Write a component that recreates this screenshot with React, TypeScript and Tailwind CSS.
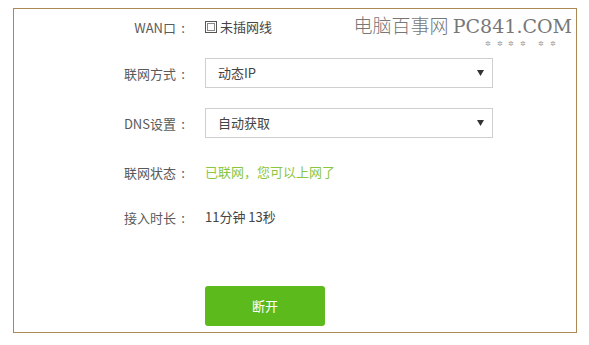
import React from "react";

const font = { fontFamily: '"Noto Sans CJK SC", "Noto Sans", sans-serif' };

function Label({ children }: { children: React.ReactNode }) {
  return (
    <div className="flex w-[176px] shrink-0 items-center justify-end text-[13px] leading-none text-[#5a5a5a]">
      <span>{children}</span>
      <span className="inline-block w-[14px] text-center">:</span>
    </div>
  );
}

function Select({ value }: { value: string }) {
  return (
    <div className="ml-[15px] flex h-[30px] w-[288px] items-center justify-between border border-[#cfcfcf] bg-white pl-[12px] pr-[8px] text-[13px] text-[#444]">
      <span>{value}</span>
      <svg width="7" height="6" viewBox="0 0 7 6">
        <path d="M0 0 L7 0 L3.5 6 Z" fill="#333" />
      </svg>
    </div>
  );
}

export default function App() {
  return (
    <div className="relative h-[345px] w-[589px] bg-white" style={font}>
      <div className="absolute right-[17px] top-[13px] flex flex-col items-end">
        <div
          className="text-[19px] leading-[24px] text-[#777]"
          style={{ fontFamily: '"Noto Sans CJK SC", "DejaVu Serif", serif', fontWeight: 300 }}
        >
          电脑百事网{" "}
          <span style={{ fontFamily: '"DejaVu Serif", serif' }} className="text-[19px] leading-[24px]">
            PC841.COM
          </span>
        </div>
        <div className="mr-[14px] mt-[2px] h-[7px] whitespace-pre text-[7px] leading-[7px] tracking-[2px] text-[#999]">
          {"✲ ✲ ✲ ✲   ✲ ✲"}
        </div>
      </div>
      <div className="ml-[13px] pt-[8px]">
        <div className="flex h-[325px] w-[564px] flex-col border border-[#a98a55] pt-[3px]">
          <div className="flex h-[30px] items-center">
            <Label>WAN口</Label>
            <div className="ml-[15px] flex items-center text-[13px] text-[#444]">
              <span className="mr-[3px] flex h-[12px] w-[12px] items-center justify-center border border-[#555]">
                <span className="h-[8px] w-[8px] border border-[#888]" />
              </span>
              <span>未插网线</span>
            </div>
          </div>
          <div className="mt-[16px] flex h-[30px] items-center">
            <Label>联网方式</Label>
            <Select value="动态IP" />
          </div>
          <div className="mt-[20px] flex h-[30px] items-center">
            <Label>DNS设置</Label>
            <Select value="自动获取" />
          </div>
          <div className="mt-[19px] flex h-[30px] items-center">
            <Label>联网状态</Label>
            <div className="ml-[15px] text-[13px] text-[#8cc63f]">已联网，您可以上网了</div>
          </div>
          <div className="mt-[15px] flex h-[30px] items-center">
            <Label>接入时长</Label>
            <div className="ml-[15px] text-[13px] text-[#444]">11分钟 13秒</div>
          </div>
          <div className="ml-[191px] mt-[54px]">
            <button className="flex h-[40px] w-[120px] items-center justify-center rounded-[3px] bg-[#5cba1d] text-[13px] text-white">
              断开
            </button>
          </div>
        </div>
      </div>
    </div>
  );
}
